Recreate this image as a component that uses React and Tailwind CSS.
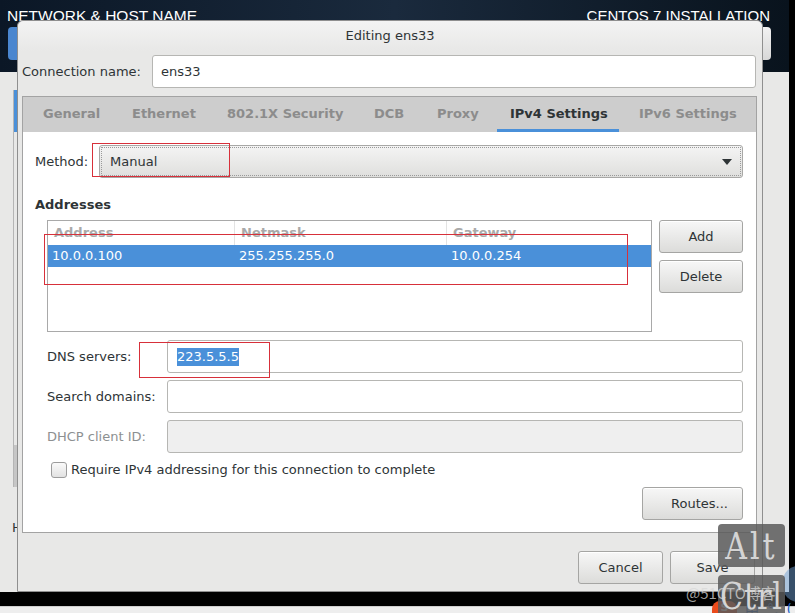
import React from 'react'

function Btn({ children, className = '' }) {
  return (
    <div className={`flex items-center justify-center h-[33px] rounded-[3px] border border-[#a5a5a3] bg-gradient-to-b from-[#f7f7f7] to-[#dcdcda] text-[13px] text-[#2e3436] shadow-[inset_0_1px_0_#ffffff] ${className}`}>
      {children}
    </div>
  )
}

function Field({ label, value, selected, disabled }) {
  return (
    <div className="flex items-center pl-[24px] pr-[13px]">
      <span className={`w-[120px] text-[13px] ${disabled ? 'text-[#8d9091]' : 'text-[#2e3436]'}`}>{label}</span>
      <div className={`flex-1 h-[33px] flex items-center pl-[9px] rounded-[3px] border border-[#b6b6b3] ${disabled ? 'bg-[#efefef]' : 'bg-white'}`}>
        {value && (
          <span className={`text-[13px] leading-[18px] ${selected ? 'bg-[#4a90d9] text-white' : 'text-[#2e3436]'}`}>{value}</span>
        )}
      </div>
    </div>
  )
}

const tabs = [
  ['General', 'w-[89px]'],
  ['Ethernet', 'w-[95px]'],
  ['802.1X Security', 'w-[147px]'],
  ['DCB', 'w-[63px]'],
  ['Proxy', 'w-[73px]'],
]

function Dialog() {
  return (
    <div className="absolute left-[17px] top-[20px] w-[746px] h-[572px] flex flex-col bg-[#e8e8e7] border border-[#8f8f8f] rounded-t-[6px] font-['DejaVu_Sans',sans-serif] text-[#2e3436]">
      <div className="h-[30px] flex items-center justify-center text-[13px] rounded-t-[6px] bg-gradient-to-b from-[#f3f3f3] to-[#e8e8e7]">
        Editing ens33
      </div>

      <div className="mt-[4px] flex items-center pl-[4px] pr-[6px]">
        <span className="w-[130px] text-[13px]">Connection name:</span>
        <div className="flex-1 h-[33px] flex items-center pl-[8px] rounded-[3px] border border-[#b6b6b3] bg-white text-[13px]">
          ens33
        </div>
      </div>

      <div className="mt-[8px] ml-[4px] mr-[5px] h-[437px] flex flex-col border border-[#a3a3a3]">
        <div className="h-[35px] flex pl-[7px] pb-[2px] bg-[#cdcdcd] text-[13px] font-bold text-[#8c8c8c]">
          {tabs.map(([t, w]) => (
            <div key={t} className={`${w} flex items-center pl-[13px]`}>{t}</div>
          ))}
          <div className="w-[122px] -mb-[2px] flex items-center pl-[13px] pt-[1px] border-b-[3px] border-[#4a90d9] text-[#2e3436]">IPv4 Settings</div>
          <div className="w-[7px]" />
          <div className="flex items-center pl-[13px]">IPv6 Settings</div>
        </div>

        <div className="flex-1 bg-white flex flex-col">
          <div className="mt-[13px] flex items-center pl-[12px] pr-[13px]">
            <span className="w-[64px] text-[13px]">Method:</span>
            <div className="flex-1 h-[33px] flex items-center justify-between pl-[10px] pr-[10px] rounded-[3px] border border-[#a8a8a6] bg-gradient-to-b from-[#f4f4f4] to-[#dfdfdd] outline-1 outline-dotted outline-[#9a9a9a] outline-offset-[-3px]">
              <span className="text-[13px]">Manual</span>
              <svg width="10" height="6" viewBox="0 0 10 6"><path d="M0 0h10L5 6z" fill="#2e3436" /></svg>
            </div>
          </div>

          <div className="mt-[19px] pl-[12px] text-[13px] leading-[16px] font-bold">Addresses</div>

          <div className="mt-[7px] flex pl-[24px] pr-[13px]">
            <div className="w-[605px] h-[112px] border border-[#a9a9a9] flex flex-col">
              <div className="h-[24px] flex text-[13px] font-bold text-[#a9a9a9] leading-[18px]">
                <div className="w-[187px] pl-[6px] pt-[3px] border-r border-[#e3e3e3]">Address</div>
                <div className="w-[212px] pl-[6px] pt-[3px] border-r border-[#e3e3e3]">Netmask</div>
                <div className="flex-1 pl-[6px] pt-[3px]">Gateway</div>
              </div>
              <div className="h-[22px] flex items-center bg-[#4a90d9] text-white text-[13px]">
                <div className="w-[187px] pl-[4px]">10.0.0.100</div>
                <div className="w-[212px] pl-[4px]">255.255.255.0</div>
                <div className="flex-1 pl-[4px]">10.0.0.254</div>
              </div>
            </div>
            <div className="ml-[7px] flex-1 flex flex-col gap-[7px]">
              <Btn>Add</Btn>
              <Btn>Delete</Btn>
            </div>
          </div>

          <div className="mt-[8px] flex flex-col gap-[7px]">
            <Field label="DNS servers:" value="223.5.5.5" selected />
            <Field label="Search domains:" />
            <Field label="DHCP client ID:" disabled />
          </div>

          <div className="mt-[8px] h-[17px] flex items-center pl-[28px] gap-[4px]">
            <div className="w-[16px] h-[16px] rounded-[3px] border border-[#9c9c9c] bg-gradient-to-b from-[#fafafa] to-[#e2e2e2]" />
            <span className="text-[13px]">Require IPv4 addressing for this connection to complete</span>
          </div>

          <div className="mt-[9px] flex justify-end pr-[13px]">
            <Btn className="w-[101px] justify-end pr-[14px]">Routes...</Btn>
          </div>
        </div>
      </div>

      <div className="mt-[18px] flex justify-end gap-[7px] pr-[7px]">
        <Btn className="w-[85px]">Cancel</Btn>
        <Btn className="w-[85px]">Save</Btn>
      </div>
    </div>
  )
}

export default function App() {
  return (
    <div className="relative w-[795px] h-[613px] overflow-hidden flex flex-col bg-black font-['DejaVu_Sans',sans-serif]">
      <div className="h-[592px] flex">
        <div className="w-[789px] flex flex-col bg-[#e8e8e7]">
          <div className="h-[72px] flex flex-col bg-gradient-to-r from-[#0b1726] via-[#1a2a3d] to-[#09131d] text-white font-['Liberation_Sans',sans-serif]">
            <div className="flex justify-between pl-[7px] pr-[19px] pt-[7px] leading-[18px]">
              <span className="text-[15.5px]">NETWORK &amp; HOST NAME</span>
              <span className="text-[15px]">CENTOS 7 INSTALLATION</span>
            </div>
            <div className="mt-[2px] flex justify-between pl-[8px] pr-[18px]">
              <div className="w-[80px] h-[33px] rounded-[4px] bg-[#4a86cf]" />
              <div className="w-[80px] h-[33px] rounded-[4px] bg-gradient-to-b from-[#f2f2f2] to-[#d8d8d8]" />
            </div>
          </div>
          <div className="flex-1 flex flex-col pl-[13px] pt-[18px]">
            <div className="w-[120px] h-[397px] border-l border-[#b5b5b5] flex flex-col">
              <div className="h-[42px] bg-[#4a90d9]" />
              <div className="mt-auto h-[42px] w-[3px] bg-[#c6c6c6]" />
            </div>
            <div className="mt-[31px] -ml-[1px] text-[13px] text-[#2e3436]">Host name:</div>
          </div>
        </div>
        <div className="w-[6px] bg-black" />
      </div>
      <div className="h-[14px] bg-black" />
      <div className="h-[7px] bg-[#eeeeee] border-t border-[#cfcfcf]" />

      <Dialog />

      {/* annotation boxes */}
      <div className="absolute left-[92px] top-[143px] w-[138px] h-[34px] border border-[#d7303a]" />
      <div className="absolute left-[44px] top-[234px] w-[584px] h-[51px] border border-[#d7303a]" />
      <div className="absolute left-[139px] top-[342px] w-[131px] h-[36px] border border-[#d7303a]" />

      {/* input method toolbar */}
      <div className="absolute left-[712px] top-[601px] flex items-start gap-[8px]">
        <div className="w-[25px] h-[16px] rounded-t-[8px] bg-[#ea4b1c] flex justify-center text-white text-[11px] font-bold leading-[14px]">S</div>
        <span className="text-[14px] leading-[16px] text-[#1f63c9] font-['Noto_Sans_CJK_SC',sans-serif]">中</span>
        <span className="text-[14px] leading-[16px] text-[#1f63c9]">°,</span>
        <span className="text-[14px] leading-[16px] text-[#1f63c9]">(</span>
      </div>
      <div className="absolute left-[783px] top-[566px] w-[30px] h-[36px] rounded-full bg-[#6f9fd4]/50" />

      {/* key overlays */}
      <div className="absolute left-[718px] top-[524px] w-[67px] h-[43px] rounded-[4px] bg-[#5a5a5a]/85 flex items-center justify-center overflow-hidden">
        <span className="text-[30px] leading-[30px] text-[#d4d4d4] font-['DejaVu_Serif',serif] font-light tracking-[3px] scale-y-[1.25]">Alt</span>
      </div>
      <div className="absolute left-[718px] top-[575px] w-[67px] h-[50px] rounded-[4px] bg-[#5a5a5a]/85 flex justify-center overflow-hidden pt-[8px]">
        <span className="text-[30px] leading-[30px] text-[#d4d4d4] font-['DejaVu_Serif',serif] tracking-[1px] scale-y-[1.25]">Ctrl</span>
      </div>

      {/* watermark */}
      <div className="absolute left-[686px] top-[583px] text-[15px] leading-[20px] text-[#d8d8d8]/75 font-['Noto_Sans_CJK_SC',sans-serif]">@51CTO博客</div>
    </div>
  )
}
